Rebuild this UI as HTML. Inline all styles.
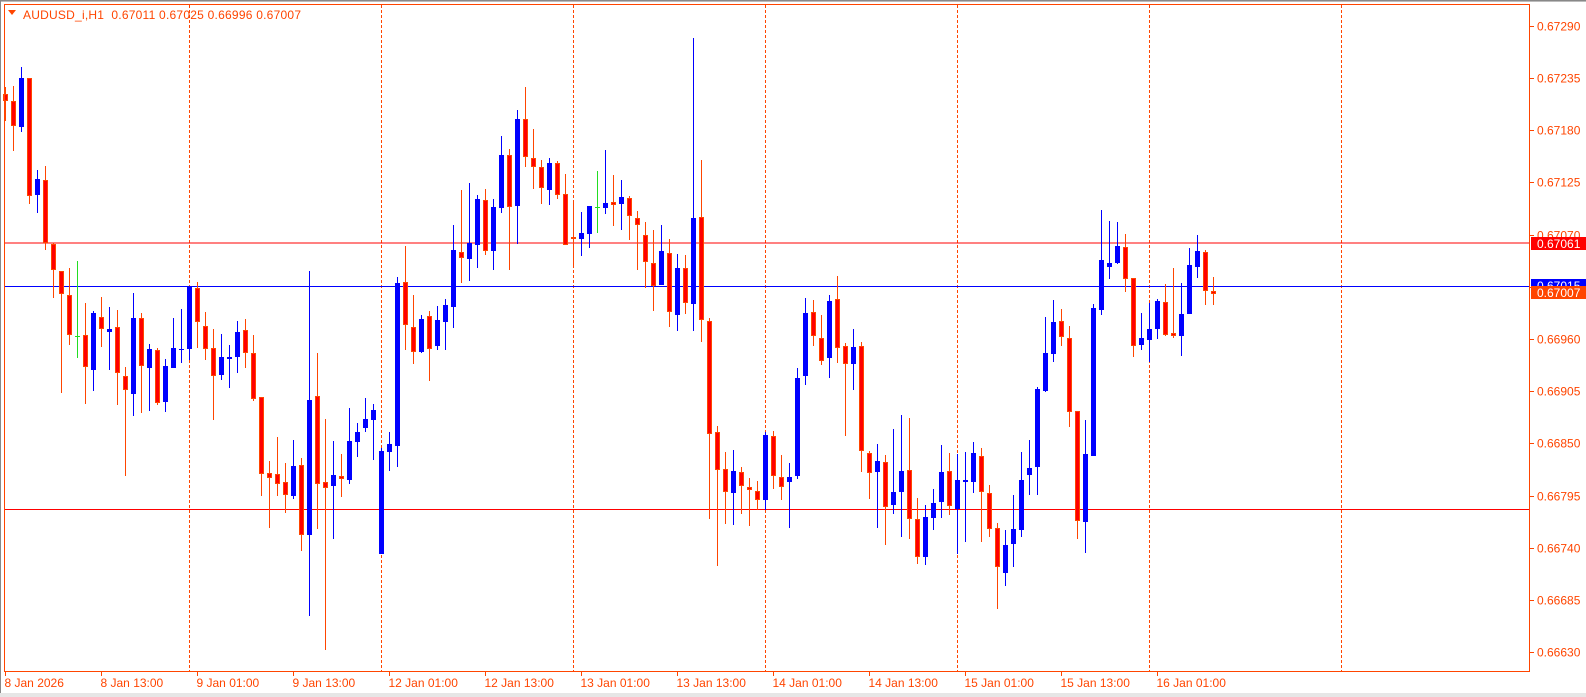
<!DOCTYPE html>
<html><head><meta charset="utf-8"><style>
html,body{margin:0;padding:0;background:#fff;width:1586px;height:697px;overflow:hidden}
svg{display:block}
text{font-family:"Liberation Sans",sans-serif;font-size:12px}
</style></head><body>
<svg id="s" width="1586" height="697" xmlns="http://www.w3.org/2000/svg">
<rect x="0" y="0" width="1586" height="697" fill="#fff"/>
<line x1="0" y1="0.5" x2="1586" y2="0.5" stroke="#888" stroke-width="1"/>
<line x1="0" y1="1.5" x2="1586" y2="1.5" stroke="#bbb" stroke-width="1"/>
<line x1="0.5" y1="0" x2="0.5" y2="697" stroke="#888"/>
<rect x="0" y="693" width="1586" height="4" fill="#e6e6e6"/>
<g id="grid"></g>
<line x1="5" y1="243" x2="1530" y2="243" stroke="#ff0000" stroke-width="1"/>
<line x1="5" y1="286.5" x2="1530" y2="286.5" stroke="#0000ff" stroke-width="1"/>
<line x1="5" y1="509.5" x2="1530" y2="509.5" stroke="#ff0000" stroke-width="1"/>
<g id="c"></g>
<rect x="4.5" y="4.5" width="1525" height="667" fill="none" stroke="#ff4500" stroke-width="1"/>
<g id="ax"></g>
<polygon points="8,10 16,10 12,15" fill="#ff4500"/>
<text x="23" y="19" fill="#ff4500" textLength="278" lengthAdjust="spacing">AUDUSD_i,H1&#160;&#160;0.67011 0.67025 0.66996 0.67007</text>
<rect x="1531" y="237" width="55" height="13" fill="#ff0000"/>
<text x="1537" y="248" fill="#fff">0.67061</text>
<rect x="1531" y="279" width="55" height="8" fill="#0000ff"/>
<text x="1537" y="290" fill="#fff">0.67015</text>
<rect x="1531" y="286" width="55" height="13" fill="#ff4500"/>
<text x="1537" y="297" fill="#fff">0.67007</text>
</svg>
<script>
var D=[
[82,88,94,112,'r'],[81,94,116,138,'r'],[65,74,117,121,'b'],[74,74,177,184,'r'],[154,162,176,192,'b'],[151,163,218,224,'r'],[218,219,241,266,'r'],[242,242,262,348,'r'],[240,263,298,307,'r'],[234,299,299,318,'g'],
[270,298,326,358,'r'],[277,279,328,347,'b'],[265,282,293,308,'r'],[274,293,295,328,'b'],[276,291,331,359,'r'],[326,334,346,421,'r'],[261,283,349,368,'b'],[279,283,325,366,'r'],[306,310,327,364,'b'],[309,311,357,359,'r'],
[319,325,356,365,'b'],[283,309,327,327,'b'],[275,310,311,322,'b'],[256,256,310,320,'b'],[252,257,287,309,'r'],[278,290,310,320,'r'],[293,309,334,372,'r'],[297,317,333,337,'b'],[307,317,319,344,'b'],[286,295,317,331,'b'],
[284,294,314,327,'r'],[298,314,354,355,'r'],[352,352,419,438,'r'],[408,418,422,466,'r'],[387,419,428,438,'r'],[409,426,437,453,'r'],[389,412,438,441,'b'],
[390,396,455,468,'r'],[233,341,455,523,'b'],[302,338,412,450,'r'],[357,410,415,552,'r'],[376,404,414,458,'b'],[387,405,408,423,'r'],[348,376,409,412,'b'],[361,368,377,389,'b'],[340,357,365,368,'b'],[345,350,358,392,'b'],
[382,384,471,471,'b'],[368,378,385,401,'b'],[238,243,380,398,'b'],[212,242,278,299,'r'],[253,280,301,311,'r'],[270,273,301,302,'b'],[266,271,298,325,'r'],[262,274,296,299,'b'],[256,261,276,299,'b'],[194,215,263,281,'b'],
[165,217,222,243,'r'],[159,209,223,241,'b'],[169,172,211,230,'b'],[164,173,216,219,'r'],[172,179,216,232,'b'],[119,135,180,184,'b'],[130,135,179,232,'r'],[97,105,178,210,'b'],[78,105,137,145,'r'],[113,138,145,164,'r'],
[139,145,163,176,'r'],[138,142,165,177,'b'],[140,142,169,172,'r'],[151,168,211,211,'r'],[175,204,206,229,'r'],[183,201,206,220,'b'],[178,178,202,213,'b'],
[166,201,201,226,'g'],[146,197,202,208,'b'],[170,196,199,219,'r'],[175,191,198,223,'b'],[190,192,210,233,'r'],[205,212,218,262,'r'],[215,228,254,279,'r'],[223,255,277,301,'r'],[218,243,276,276,'b'],[232,245,302,317,'r'],
[246,260,305,321,'b'],[247,260,294,304,'r'],[38,212,295,321,'b'],[156,211,310,331,'r'],[308,311,420,502,'r'],[412,418,455,548,'r'],[438,454,476,507,'r'],[436,456,477,508,'b'],[452,457,470,497,'r'],[463,471,474,509,'r'],
[466,475,484,494,'r'],[418,421,484,494,'b'],[417,422,461,473,'r'],[440,462,471,484,'r'],[448,462,467,511,'b'],[356,366,461,464,'b'],[289,303,364,373,'b'],[291,302,326,335,'r'],[305,327,350,354,'r'],[286,292,347,366,'b'],
[268,290,337,352,'r'],[332,335,353,422,'r'],[319,336,353,378,'b'],[331,335,437,457,'r'],[437,439,458,483,'r'],[430,446,457,511,'b'],[440,447,491,527,'r'],
[429,492,505,514,'b'],[415,471,492,537,'b'],[418,470,519,539,'r'],[498,519,557,564,'r'],[505,517,557,565,'b'],[489,503,518,530,'b'],[445,472,502,518,'b'],[453,471,506,515,'r'],[454,480,509,554,'b'],[452,480,482,542,'b'],
[442,453,482,493,'b'],[448,456,492,542,'r'],[485,493,529,537,'r'],[523,528,567,609,'r'],[530,545,573,586,'b'],[495,529,544,567,'b'],[452,480,530,537,'b'],[440,468,475,495,'b'],[387,389,467,495,'b'],[317,353,391,392,'b'],
[300,322,354,362,'b'],[309,321,337,346,'r'],[326,338,412,427,'r'],[411,411,521,539,'r'],[420,454,522,553,'b'],[304,308,456,456,'b'],[210,260,310,315,'b'],[221,263,267,279,'b'],[222,246,263,264,'b'],[234,247,279,292,'r'],
[278,278,346,357,'r'],[313,338,345,350,'b'],[303,329,340,362,'b'],[299,301,329,339,'b'],[284,302,335,336,'r'],[268,333,336,338,'r'],[283,314,336,356,'b'],[248,265,314,314,'b'],[235,251,267,278,'b'],[250,252,291,305,'r'],
[277,291,294,305,'r']
];
function fix(k,y){
 if(k<=36) return 50+(y-50)*1.1494;
 if(k<=73) return 30+(y-30)*1.1886;
 if(k<=110) return 30+(y-30)*1.0354;
 return y;
}
var g=document.getElementById('c'),out='';
for(var k=0;k<D.length;k++){
 var d=D[k],h=fix(k,d[0]),t=fix(k,d[1]),b=fix(k,d[2]),l=fix(k,d[3]);
 if(k==151){h=277;t=290.5;b=294.3;l=305;}
 var wx=5+8*k+0.5,bx=3+8*k;
 var col=d[4]=='b'?'#0000ff':(d[4]=='g'?'#22dd22':'#ff4500');
 out+='<line x1="'+wx+'" y1="'+Math.round(h)+'" x2="'+wx+'" y2="'+Math.round(l)+'" stroke="'+col+'" stroke-width="1"/>';
 var bt=Math.round(t),bb=Math.round(b);if(bb-bt<1)bb=bt+1;
 if(d[4]=='b') out+='<rect x="'+bx+'" y="'+bt+'" width="5" height="'+(bb-bt)+'" fill="#0000ff"/>';
 else if(d[4]=='g') out+='<line x1="'+bx+'" y1="'+(bt+0.5)+'" x2="'+(bx+5)+'" y2="'+(bt+0.5)+'" stroke="#22dd22"/>';
 else out+='<rect x="'+(bx+0.5)+'" y="'+(bt+0.5)+'" width="4" height="'+Math.max(1,bb-bt-1)+'" fill="#ff0000" stroke="#ff4500" stroke-width="1"/>';
}
g.innerHTML=out;
var gr='';
for(var i=0;i<7;i++){var x=189.5+192*i;gr+='<line x1="'+x+'" y1="5" x2="'+x+'" y2="671" stroke="#ff4500" stroke-width="1" stroke-dasharray="3,2"/>';}
document.getElementById('grid').innerHTML=gr;
var ax='',dates=['8 Jan 2026','8 Jan 13:00','9 Jan 01:00','9 Jan 13:00','12 Jan 01:00','12 Jan 13:00','13 Jan 01:00','13 Jan 13:00','14 Jan 01:00','14 Jan 13:00','15 Jan 01:00','15 Jan 13:00','16 Jan 01:00'];
for(var i=0;i<dates.length;i++){var x=5.5+96*i;ax+='<line x1="'+x+'" y1="671" x2="'+x+'" y2="676" stroke="#ff4500"/><text x="'+(x-1)+'" y="687" fill="#ff4500">'+dates[i]+'</text>';}
for(var i=0;i<13;i++){var p=(0.67290-0.00055*i).toFixed(5),y=25.7+52.22*i;ax+='<line x1="1530" y1="'+(Math.round(y)+0.5)+'" x2="1534" y2="'+(Math.round(y)+0.5)+'" stroke="#ff4500"/><text x="1537" y="'+(Math.round(y)+4.5)+'" fill="#ff4500">'+p+'</text>';}
document.getElementById('ax').innerHTML=ax;
</script>
</body></html>
